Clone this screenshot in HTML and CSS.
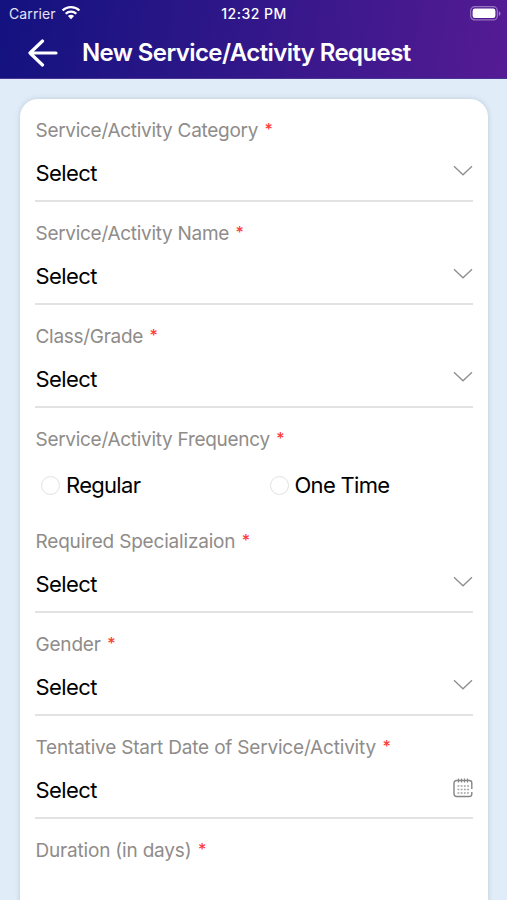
FILE: index.html
```html
<!DOCTYPE html>
<html lang="en">
<head>
<meta charset="utf-8">
<title>New Service/Activity Request</title>
<link rel="stylesheet" href="styles.css">
</head>
<body>
<svg width="0" height="0" class="defs">
  <symbol id="chevron" viewBox="0 0 20 12"><path d="M1 1.200 10 9.800 19 1.200" fill="none" stroke="#8e8e8e" stroke-width="1.300"/></symbol>
</svg>
<header class="header">
  <div class="status">
    <div class="carrier"><span class="carrier-name">Carrier</span>
      <svg class="wifi" width="20" height="15" viewBox="0 0 20 15" fill="none" stroke="#fff" stroke-width="2.300"><path d="M1.600 5.500a12 12 0 0 1 16.800 0M4.700 8.800a7.600 7.600 0 0 1 10.600 0"/><path d="M10 14.200 6.900 11.100a4.500 4.500 0 0 1 6.200 0z" fill="#fff" stroke="none"/></svg>
    </div>
    <div class="time"><span class="time-text">12:32 PM</span></div>
    <svg class="battery" width="31" height="15" viewBox="0 0 31 15"><rect x=".7" y=".7" width="26.600" height="13.200" rx="4" fill="none" stroke="#fff" stroke-opacity=".4" stroke-width="1.200"/><rect x="2.600" y="2.600" width="22.800" height="9.400" rx="2.300" fill="#fff"/><path d="M28.800 5.200c2.200.8 2.200 3.800 0 4.600z" fill="#fff" fill-opacity=".45"/></svg>
  </div>
  <div class="nav">
    <svg class="back" width="30" height="28" viewBox="0 0 30 28" fill="none" stroke="#fff" stroke-width="3.200" stroke-linecap="round" stroke-linejoin="round"><path d="M14.500 2 2 14 14.500 26M2.500 14H28"/></svg>
    <h1 class="title"><span class="title-text">New Service/Activity Request</span></h1>
  </div>
</header>
<main class="page">
  <form class="card">
    <div class="field"><div class="label"><span class="label-text">Service/Activity Category</span><span class="req">*</span></div><div class="value"><span class="value-text">Select</span><svg class="chevron"><use href="#chevron"/></svg></div></div>
    <div class="field"><div class="label"><span class="label-text">Service/Activity Name</span><span class="req">*</span></div><div class="value"><span class="value-text">Select</span><svg class="chevron"><use href="#chevron"/></svg></div></div>
    <div class="field"><div class="label"><span class="label-text">Class/Grade</span><span class="req">*</span></div><div class="value"><span class="value-text">Select</span><svg class="chevron"><use href="#chevron"/></svg></div></div>
    <div class="field choice"><div class="label"><span class="label-text">Service/Activity Frequency</span><span class="req">*</span></div>
      <div class="options"><div class="option"><i class="radio"></i><span class="value-text">Regular</span></div><div class="option"><i class="radio"></i><span class="value-text">One Time</span></div></div></div>
    <div class="field"><div class="label loose"><span class="label-text">Required Specializaion</span><span class="req">*</span></div><div class="value"><span class="value-text">Select</span><svg class="chevron"><use href="#chevron"/></svg></div></div>
    <div class="field"><div class="label loose"><span class="label-text">Gender</span><span class="req">*</span></div><div class="value"><span class="value-text">Select</span><svg class="chevron"><use href="#chevron"/></svg></div></div>
    <div class="field"><div class="label loose"><span class="label-text">Tentative Start Date of Service/Activity</span><span class="req">*</span></div><div class="value"><span class="value-text">Select</span>
      <svg class="calendar" width="20" height="20" viewBox="0 0 20 20" fill="none" stroke="#858585"><path d="M18.800 11V5a2.500 2.500 0 0 0-2.500-2.500H3.500A2.500 2.500 0 0 0 1 5v11a2.500 2.500 0 0 0 2.500 2.500h12.800a2.500 2.500 0 0 0 2.500-2.300V14" stroke-width="1.400"/><path d="M5.500.5v4M8.500.5v4M11.500.5v4M14.500.5v4" stroke-width="1.200"/><path d="M4.500 8h11.500M4.500 11.500h11.500M4.500 15h11.500" stroke="#a0a0a0" stroke-width="1.600" stroke-dasharray="1.800 1.400"/></svg></div></div>
    <div class="field"><div class="label loose"><span class="label-text">Duration (in days)</span><span class="req">*</span></div></div>
  </form>
</main>
</body>
</html>
```
FILE: styles.css
```css
* { box-sizing: border-box; }
body {
  margin: 0;
  height: 900px;
  overflow: hidden;
  display: flex;
  flex-direction: column;
  background: #e0ecf7;
  font-family: Inter, "Liberation Sans", sans-serif;
}
.defs { position: absolute; }
.header {
  height: 79px;
  flex: none;
  color: #fff;
  background: linear-gradient(100deg, #131280 0%, #311789 48%, #551b94 100%);
  border-bottom: 1px solid #493394;
}
.status {
  height: 27px;
  padding: 0 6px 0 9px;
  display: grid;
  grid-template-columns: 1fr auto 1fr;
  align-items: center;
  font-size: 14px;
}
.carrier { display: flex; align-items: center; gap: 5px; color: #e6e3f5; }
.carrier-name { letter-spacing: .1px; }
.wifi { margin-top: -3px; }
.time { font-weight: 500; font-size: 14px; letter-spacing: .5px; margin-left: -2px; }
.battery { justify-self: end; }
.nav { height: 51px; padding-left: 28px; display: flex; align-items: center; gap: 24px; }
.title { margin: 0; font-size: 24px; font-weight: 600; line-height: 30px; white-space: nowrap; letter-spacing: -.6px; }
.page { flex: 1; padding: 20px 19.5px 0 20px; }
.card {
  height: 820px;
  padding: 0 14.5px 0 15px;
  background: #fff;
  border-radius: 18px;
  box-shadow: 0 0 5px rgba(80, 110, 130, .25);
}
.field { height: 103px; padding-top: 20px; border-bottom: 2px solid #e2e2e2; }
.choice { height: 102px; border-bottom: 0; }
.label { height: 24px; padding-left: .5px; display: flex; align-items: center; gap: 6.5px; font-size: 19px; line-height: 24px; letter-spacing: -.29px; color: #8f8c8a; white-space: nowrap; }
.loose { letter-spacing: -.19px; }
.req { margin-top: -4px; font-size: 16px; font-weight: 500; color: #ff3b36; }
.value { height: 60px; padding-left: .5px; display: flex; align-items: center; justify-content: space-between; font-size: 22px; letter-spacing: -.6px; color: #000; }
.chevron { width: 20px; height: 12px; margin-top: -5px; }
.calendar { margin-top: -5px; }
.options { height: 66px; display: grid; grid-template-columns: 228.5px 1fr; align-items: center; padding-left: 6px; font-size: 22px; letter-spacing: -.7px; }
.option { display: flex; align-items: center; gap: 6px; }
.radio { width: 19px; height: 19px; border: 1px solid #e2e2e2; border-radius: 50%; }
```
